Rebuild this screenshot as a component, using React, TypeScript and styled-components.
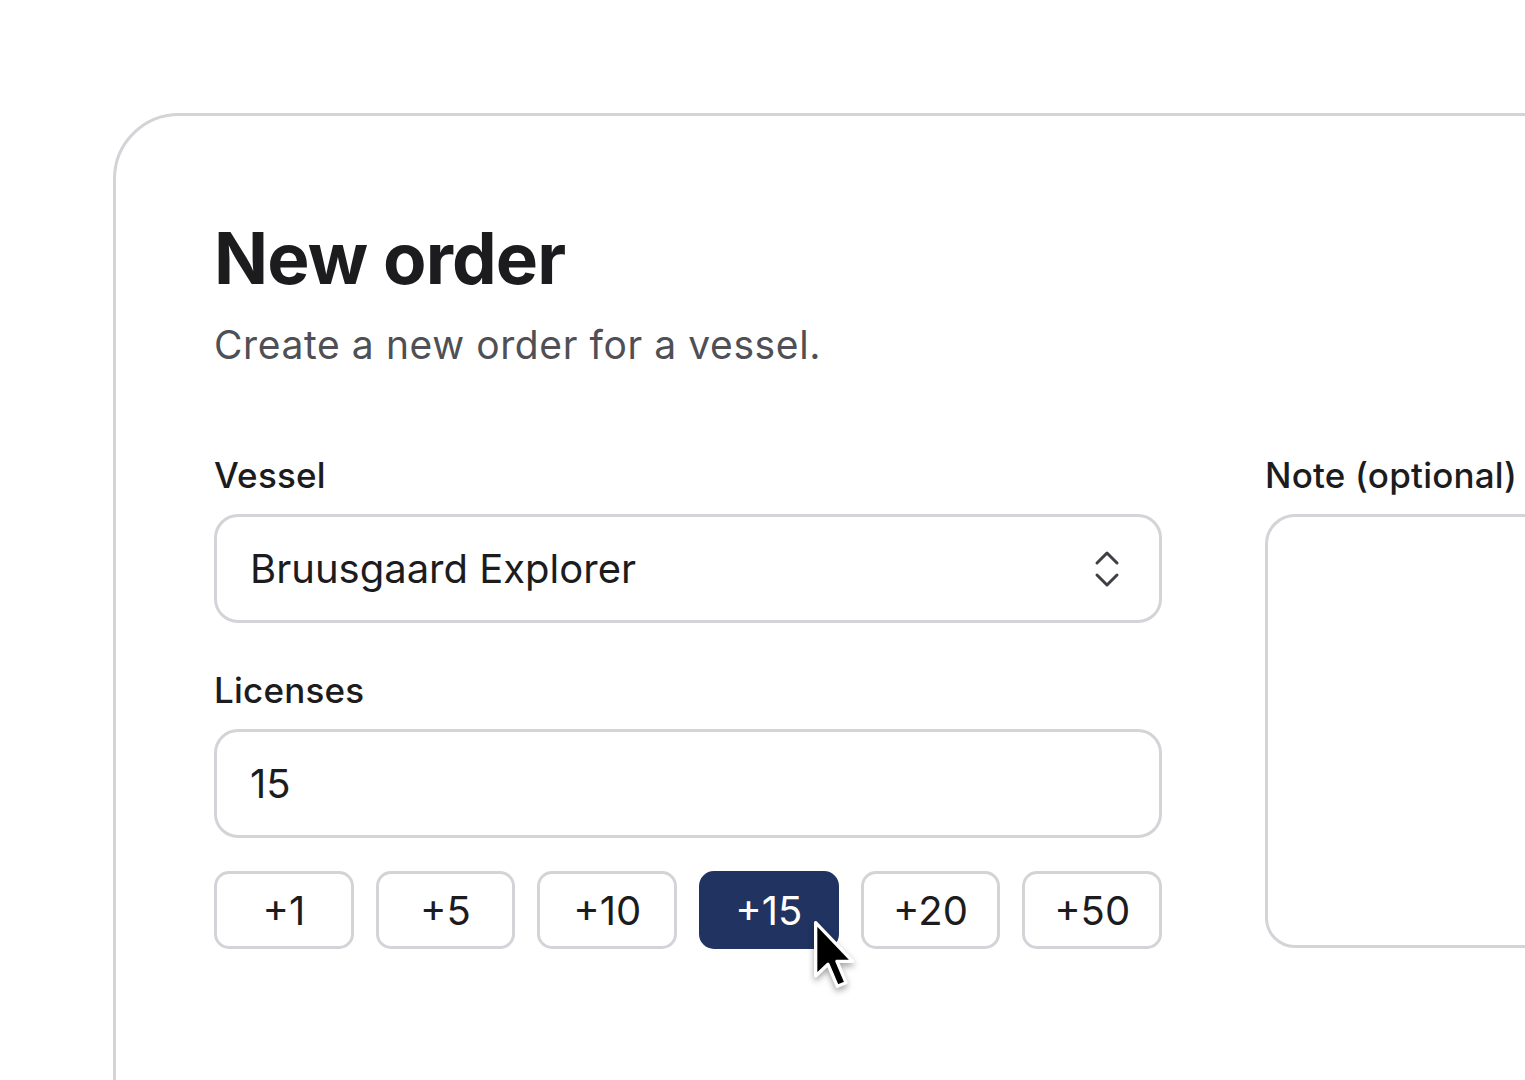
import styled, { createGlobalStyle } from "styled-components";

const GlobalStyle = createGlobalStyle`
  html, body {
    margin: 0;
    padding: 0;
    background: #ffffff;
    overflow: hidden;
  }
  body {
    width: 1525px;
    height: 1080px;
    font-family: Inter, "Noto Sans", sans-serif;
    color: #1c1c1e;
  }
`;

const COLORS = {
  border: "#d4d4d8",
  text: "#1c1c1e",
  muted: "#4f4f55",
  primary: "#203361",
  icon: "#3f3f46",
};

const Page = styled.div`
  padding: 113px 0 0 113px;
  width: 1525px;
  height: 1080px;
  box-sizing: border-box;
`;

const Card = styled.section`
  width: 1700px;
  height: 1200px;
  box-sizing: border-box;
  border: 3px solid ${COLORS.border};
  border-radius: 66px;
  padding: 106px 0 0 98px;
`;

const Title = styled.h1`
  margin: 0;
  font-size: 71px;
  line-height: 72px;
  font-weight: 700;
  letter-spacing: -0.9px;
  color: ${COLORS.text};
`;

const Subtitle = styled.p`
  margin: 28px 0 0;
  font-size: 39px;
  line-height: 46px;
  font-weight: 400;
  letter-spacing: 0.6px;
  color: ${COLORS.muted};
`;

const FormGrid = styled.div`
  display: grid;
  grid-template-columns: 948px 948px;
  column-gap: 103px;
  margin-top: 87px;
`;

const Column = styled.div`
  display: flex;
  flex-direction: column;
`;

const Label = styled.label<{ $spaced?: boolean }>`
  display: block;
  font-size: 35px;
  line-height: 41px;
  font-weight: 500;
  letter-spacing: 0.2px;
  color: ${COLORS.text};
  margin-top: ${(p) => (p.$spaced ? "47px" : "0")};
`;

const Field = styled.div`
  margin-top: 18px;
  height: 109px;
  box-sizing: border-box;
  border: 3px solid ${COLORS.border};
  border-radius: 24px;
  display: flex;
  align-items: center;
  justify-content: space-between;
  padding: 0 28px 0 33px;
  font-size: 40px;
  color: ${COLORS.text};
`;

const ChevronIcon = styled.svg`
  width: 48px;
  height: 48px;
  color: ${COLORS.icon};
`;

const StepRow = styled.div`
  margin-top: 33px;
  display: grid;
  grid-template-columns: repeat(6, 1fr);
  column-gap: 22px;
`;

const StepButton = styled.button<{ $active?: boolean }>`
  position: relative;
  height: 78px;
  box-sizing: border-box;
  border-radius: 15px;
  border: 3px solid ${(p) => (p.$active ? COLORS.primary : COLORS.border)};
  background: ${(p) => (p.$active ? COLORS.primary : "#ffffff")};
  color: ${(p) => (p.$active ? "#ffffff" : COLORS.text)};
  font-family: inherit;
  font-size: 40px;
  font-weight: 400;
  padding: 0;
  display: flex;
  align-items: center;
  justify-content: center;
`;

const NoteBox = styled.div`
  margin-top: 18px;
  height: 434px;
  box-sizing: border-box;
  border: 3px solid ${COLORS.border};
  border-radius: 30px;
`;

const Pointer = styled.svg`
  position: absolute;
  left: 112px;
  top: 47px;
  width: 40px;
  height: 70px;
  overflow: visible;
`;

function ChevronsUpDown() {
  return (
    <ChevronIcon viewBox="0 0 24 24" fill="none" stroke="currentColor" strokeWidth={1.5} strokeLinecap="round" strokeLinejoin="round">
      <path d="m7 15 5 5 5-5" />
      <path d="m7 9 5-5 5 5" />
    </ChevronIcon>
  );
}

function MouseArrow() {
  return (
    <Pointer viewBox="0 0 12 21">
      <path
        d="M0.5 0.5 L0.5 16.5 L4.2 13 L7 19.6 L9.6 18.5 L6.9 12.1 L11.6 12.1 Z"
        fill="#000"
        stroke="#fff"
        strokeWidth={1}
        strokeLinejoin="round"
        style={{ filter: "drop-shadow(0 1px 1px rgba(0,0,0,0.35))" }}
      />
    </Pointer>
  );
}

const steps = [1, 5, 10, 15, 20, 50];

export default function App() {
  return (
    <>
      <GlobalStyle />
      <Page>
        <Card>
          <Title>New order</Title>
          <Subtitle>Create a new order for a vessel.</Subtitle>
          <FormGrid>
            <Column>
              <Label>Vessel</Label>
              <Field>
                <span>Bruusgaard Explorer</span>
                <ChevronsUpDown />
              </Field>
              <Label $spaced>Licenses</Label>
              <Field>
                <span>15</span>
              </Field>
              <StepRow>
                {steps.map((n) => (
                  <StepButton key={n} $active={n === 15}>
                    +{n}
                    {n === 15 && <MouseArrow />}
                  </StepButton>
                ))}
              </StepRow>
            </Column>
            <Column>
              <Label>Note (optional)</Label>
              <NoteBox />
            </Column>
          </FormGrid>
        </Card>
      </Page>
    </>
  );
}
